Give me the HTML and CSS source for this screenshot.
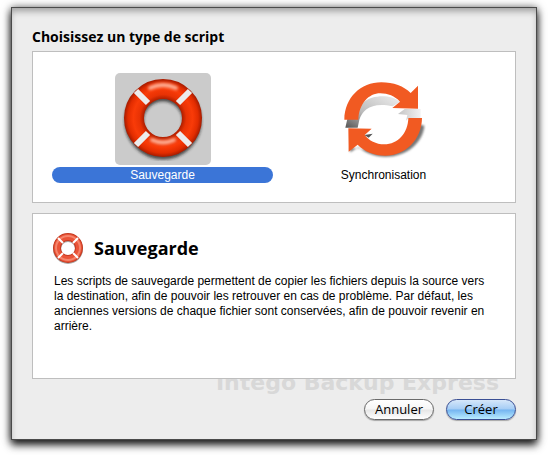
FILE: index.html
```html
<!DOCTYPE html>
<html lang="fr">
<head>
    <meta charset="UTF-8">
    <meta name="viewport" content="width=device-width, initial-scale=1.0">
    <title>Choisissez un type de script</title>
    <link rel="stylesheet" href="styles.css">
</head>
<body>
    <main class="dialog">
        <h1>Choisissez un type de script</h1>

        <!-- Types de script -->
        <div class="panel types">
            <button type="button" class="type selected" aria-pressed="true">
                <span class="type-icon">
                    <svg width="84" height="84" viewBox="0 0 84 84" aria-hidden="true">
                        <defs>
                            <radialGradient id="ring" gradientUnits="userSpaceOnUse" cx="42" cy="41" r="39">
                                <stop offset="0.5" stop-color="#b32000"/>
                                <stop offset="0.6" stop-color="#e83204"/>
                                <stop offset="0.76" stop-color="#f93b08"/>
                                <stop offset="0.9" stop-color="#e22c00"/>
                                <stop offset="1" stop-color="#a51b00"/>
                            </radialGradient>
                            <filter id="soft" x="-20%" y="-20%" width="140%" height="140%">
                                <feGaussianBlur stdDeviation="1.5"/>
                            </filter>
                        </defs>
                        <circle cx="42" cy="44" r="29" fill="none" stroke="#222" stroke-opacity="0.75" stroke-width="19" filter="url(#soft)"/>
                        <circle cx="42" cy="41" r="29" fill="none" stroke="url(#ring)" stroke-width="20"/>
                        <g fill="none" stroke="#ffb59c" stroke-width="4" stroke-linecap="round" filter="url(#soft)">
                            <path d="M29 11Q42 5 55 11"/>
                            <path d="M31 63Q42 68 53 63"/>
                        </g>
                        <g stroke="#ececec" stroke-width="6">
                            <path d="M15 14L27 26M69 14L57 26M15 68L27 56M69 68L57 56"/>
                        </g>
                    </svg>
                </span>
                <span class="type-name">Sauvegarde</span>
            </button>
            <button type="button" class="type" aria-pressed="false">
                <span class="type-icon">
                    <svg width="84" height="80" viewBox="70 56 252 240" aria-hidden="true">
                        <defs>
                            <linearGradient id="fold" x1="0" y1="1" x2="1" y2="0">
                                <stop offset="0" stop-color="#555"/>
                                <stop offset="0.4" stop-color="#bbb"/>
                                <stop offset="1" stop-color="#eee"/>
                            </linearGradient>
                            <linearGradient id="band" x1="0" y1="0" x2="1" y2="0">
                                <stop offset="0" stop-color="#c4c4c4"/>
                                <stop offset="1" stop-color="#f2f2f2"/>
                            </linearGradient>
                            <filter id="shade" x="-20%" y="-20%" width="140%" height="140%">
                                <feGaussianBlur stdDeviation="3"/>
                            </filter>
                        </defs>
                        <path fill="#777" filter="url(#shade)" d="M300 192L317 196C313 248 262 290 200 289C165 289 138 276 120 260L94 276V262L200 270C255 270 292 235 300 192Z"/>
                        <path fill="url(#fold)" d="M86 176L80 202H117L122 178C132 148 160 124 222 138L244 124C222 106 188 104 160 112C130 121 112 145 108 176Z"/>
                        <path fill="url(#band)" d="M258 146H306V173H270L262 181L266 164L238 161Z"/>
                        <path fill="#555" d="M137 224L162 220L150 232Z"/>
                        <path fill="#f15a22" d="M77 178C78 112 126 66 188 66C224 66 256 78 276 98L298 76V145L221 143L244 124C228 107 208 99 185 99C150 99 121 130 119 178Z"/>
                        <path fill="#f15a22" d="M89 204L159 205L138 224C151 241 172 252 197 252C238 252 268 218 269 173H310C309 238 261 286 200 286C167 286 137 273 117 253L90 274Z"/>
                    </svg>
                </span>
                <span class="type-name">Synchronisation</span>
            </button>
        </div>

        <!-- Description du type choisi -->
        <div class="panel details">
            <div class="details-title">
                <svg width="32" height="32" viewBox="0 0 32 32" aria-hidden="true">
                    <circle cx="16" cy="17" r="11" fill="none" stroke="#aaa" stroke-width="8"/>
                    <circle cx="16" cy="16" r="11" fill="none" stroke="#c53a20" stroke-width="8"/>
                    <circle cx="16" cy="16" r="11" fill="none" stroke="#ea5438" stroke-width="6"/>
                    <circle cx="16" cy="16" r="12" fill="none" stroke="#f5856c" stroke-width="2"/>
                    <path stroke="#fff" stroke-width="2" d="M6 6L11 11M26 6L21 11M6 26L11 21M26 26L21 21"/>
                </svg>
                <h2>Sauvegarde</h2>
            </div>
            <p>Les scripts de sauvegarde permettent de copier les fichiers depuis la source vers la destination, afin de pouvoir les retrouver en cas de problème. Par défaut, les anciennes versions de chaque fichier sont conservées, afin de pouvoir revenir en arrière.</p>
        </div>

        <div class="brand">Intego Backup Express</div>

        <div class="actions">
            <button type="button" class="btn">Annuler</button>
            <button type="button" class="btn default">Créer</button>
        </div>
    </main>
</body>
</html>
```
FILE: styles.css
```css
* {
    box-sizing: border-box;
}
body {
    margin: 0;
    padding: 7px 11px 15px;
    background: #fff;
    color: #000;
    font-family: "Liberation Sans", Arial, sans-serif;
    font-size: 12px;
}
.dialog {
    padding: 20px 20px 19px;
    background: #ededed;
    border: 1px solid #4a4a4a;
    box-shadow: 0 5px 8px rgba(0,0,0,0.85), 0 0 8px rgba(0,0,0,0.5), inset 0 5px 7px -2px rgba(0,0,0,0.35);
}
h1, h2 {
    margin: 0;
    font-family: "Open Sans", "Noto Sans", sans-serif;
    font-weight: bold;
}
h1 {
    font-size: 14px;
    line-height: 18px;
    margin-bottom: 5px;
}
button {
    font-family: inherit;
    font-size: 12px;
    color: #000;
    cursor: pointer;
}
.panel {
    position: relative;
    z-index: 1;
    background: #fff;
    border: 1px solid #bebebe;
}
.types {
    display: grid;
    grid-template-columns: 1fr 1fr;
    padding: 21px 21px 19px 19px;
    margin-bottom: 10px;
}
.type {
    display: flex;
    flex-direction: column;
    align-items: center;
    gap: 2px;
    padding: 0;
    border: none;
    background: none;
}
.type-icon {
    display: flex;
    align-items: center;
    justify-content: center;
    width: 96px;
    height: 92px;
    border-radius: 5px;
}
.type-name {
    align-self: stretch;
    line-height: 16px;
    border-radius: 8px;
}
.selected .type-icon {
    background: #cbcbcb;
}
.selected .type-name {
    background: #3b75d7;
    color: #fff;
}
.details {
    min-height: 166px;
    padding: 17px 20px 20px 21px;
}
.details-title {
    display: flex;
    align-items: center;
    gap: 10px;
    margin-left: -2px;
}
h2 {
    font-size: 18px;
    line-height: 34px;
}
.details p {
    margin: 9px 0 0;
    line-height: 15px;
}
/* Le nom du produit passe sous le panneau */
.brand {
    margin: -8px 17px 0 0;
    color: #d8d8d8;
    font-family: "DejaVu Sans", sans-serif;
    font-size: 22px;
    font-weight: bold;
    line-height: 24px;
    text-align: right;
}
.actions {
    display: flex;
    justify-content: flex-end;
    gap: 12px;
    margin-top: 4px;
}
.btn {
    width: 70px;
    height: 21px;
    padding: 0;
    border: 1px solid #6a6a6a;
    border-radius: 11px;
    background: linear-gradient(#fff 0%, #f6f6f6 48%, #e6e6e6 52%, #fff 100%);
    box-shadow: 0 1px 1px rgba(0,0,0,0.3);
    font-family: "Open Sans", "Noto Sans", sans-serif;
    font-size: 13px;
    line-height: 19px;
}
.btn.default {
    border-color: #3a4f94;
    background: linear-gradient(#d6e7fa 0%, #a5cdf5 48%, #74b4f0 52%, #b9ecff 100%);
}
```
